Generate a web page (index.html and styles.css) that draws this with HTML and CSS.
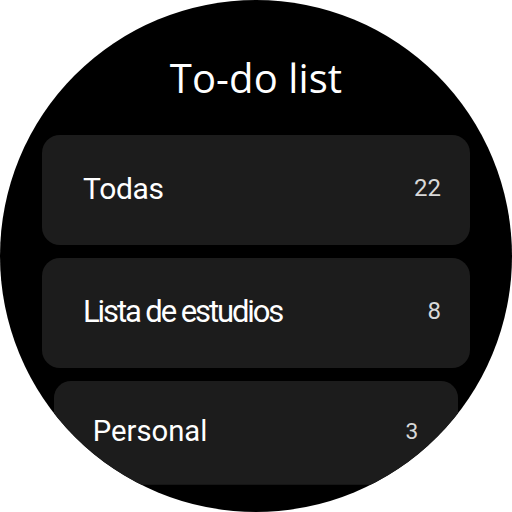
FILE: index.html
```html
<!DOCTYPE html>
<html>
<head>
<meta charset="utf-8">
<link rel="stylesheet" href="styles.css">
</head>
<body>
<div class="watch">
  <h1 class="title">To-do list</h1>
  <div class="list">
    <div class="card"><span class="label">Todas</span><span class="count">22</span></div>
    <div class="card"><span class="label label-tight">Lista de estudios</span><span class="count">8</span></div>
    <div class="card card-far"><span class="label label-wide">Personal</span><span class="count">3</span></div>
  </div>
</div>
</body>
</html>
```
FILE: styles.css
```css
html, body {
  margin: 0;
  padding: 0;
  background: #ffffff;
}
.watch {
  width: 512px;
  height: 512px;
  border-radius: 50%;
  background: #000000;
  overflow: hidden;
  display: flex;
  flex-direction: column;
  align-items: center;
  font-family: Roboto, "Noto Sans", sans-serif;
  color: #ffffff;
}
.title {
  margin: 58px 0 0 0;
  font-family: "Open Sans", Roboto, sans-serif;
  font-size: 40px;
  line-height: 40px;
  font-weight: 400;
  letter-spacing: 0.1px;
}
.list {
  margin-top: 37px;
  display: flex;
  flex-direction: column;
  gap: 13px;
}
.card {
  width: 428px;
  height: 110px;
  box-sizing: border-box;
  border-radius: 18px;
  background: #1c1c1c;
  display: flex;
  align-items: center;
  justify-content: space-between;
  padding: 0 29px 4px 41px;
}
.label {
  font-size: 30px;
  letter-spacing: -0.3px;
}
.label-tight {
  font-size: 31px;
  letter-spacing: -2.1px;
}
.label-wide {
  letter-spacing: 0;
  font-size: 31px;
}
.count {
  font-size: 24px;
  color: #d8d8d8;
}
.card-far {
  transform: scale(0.944);
  transform-origin: top center;
  padding-right: 42px;
}
```
